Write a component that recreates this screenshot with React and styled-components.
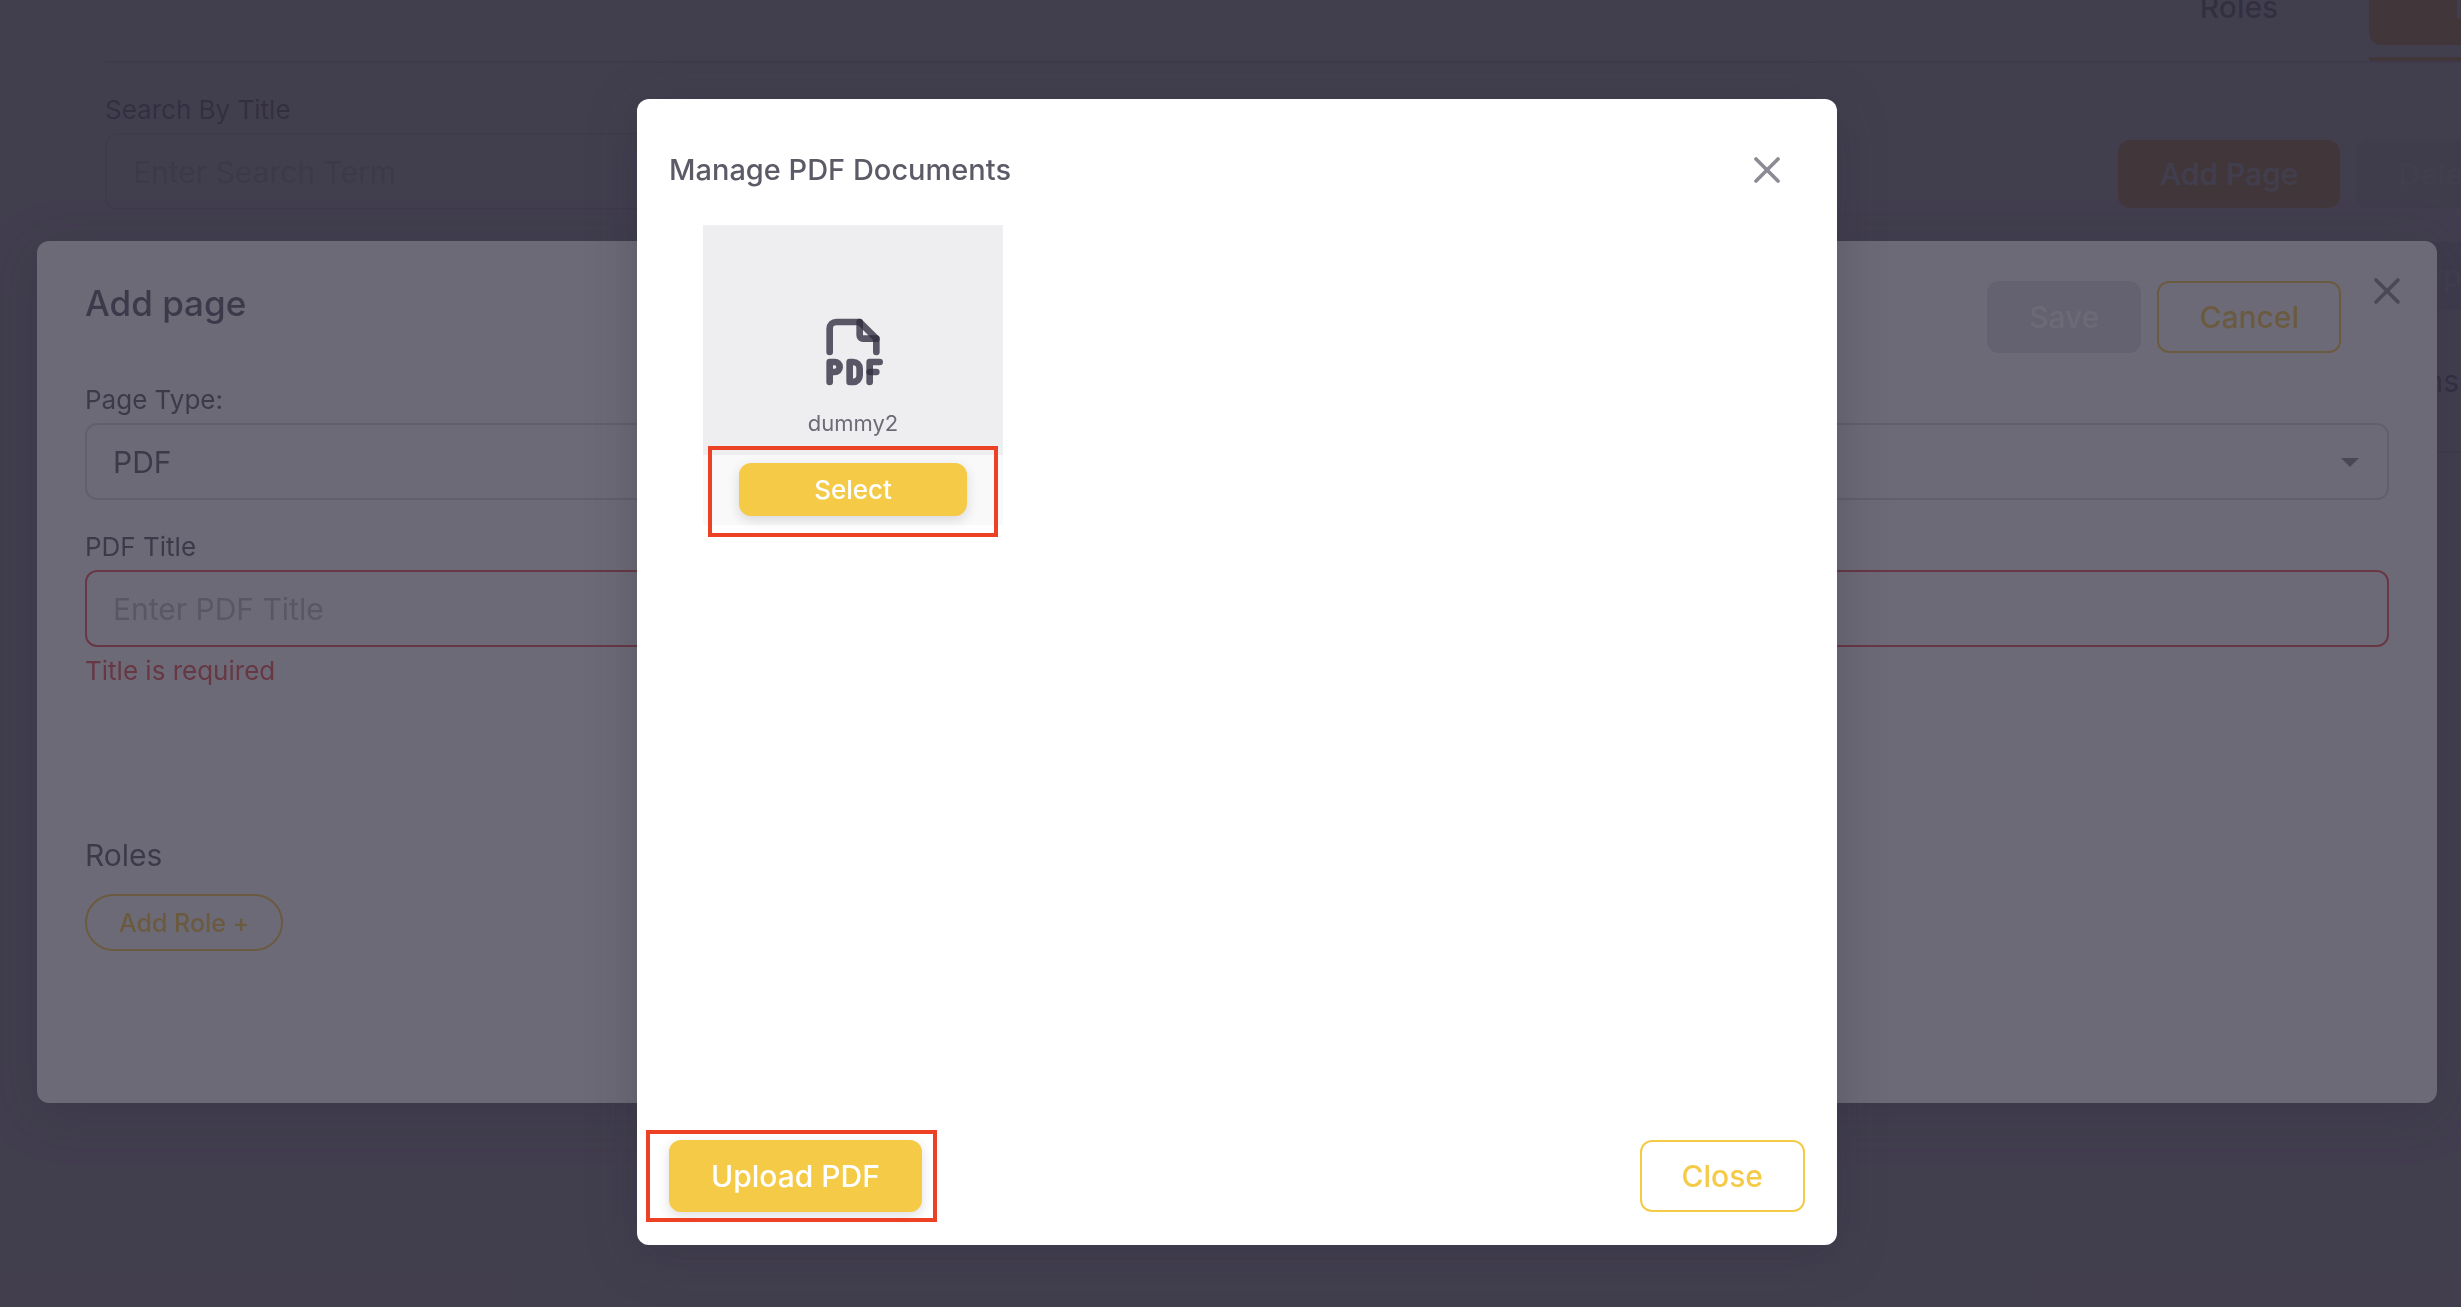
import React, { useState } from 'react';
import styled, { createGlobalStyle } from 'styled-components';
import { TbFileTypePdf, TbX } from 'react-icons/tb';

const App = () => {
  const [pageType, setPageType] = useState('PDF');
  const [title, setTitle] = useState('');
  const [search, setSearch] = useState('');

  return (
    <>
      <GlobalStyle />
      <Page>
        <Content>
          <Tabs>
            <TabItem>
              <Tab>Roles</Tab>
            </TabItem>
            <TabItem $active>
              <Tab $active>Pages</Tab>
            </TabItem>
          </Tabs>
          <Toolbar>
            <SearchField>
              <Label htmlFor="search">Search By Title</Label>
              <Input
                id="search"
                placeholder="Enter Search Term"
                value={search}
                onChange={(e) => setSearch(e.target.value)}
              />
            </SearchField>
            <ToolbarButtons>
              <Button $size="toolbar" $variant="accent">Add Page</Button>
              <Button $size="toolbar" $variant="muted">Delete Pages</Button>
            </ToolbarButtons>
          </Toolbar>
          <Table>
            <thead>
              <tr>
                <th>Type</th>
              </tr>
            </thead>
            <tbody>
              <tr>
                <td>Options</td>
              </tr>
            </tbody>
          </Table>
        </Content>
      </Page>

      <Overlay>
        <Sheet role="dialog" aria-labelledby="sheet-title">
          <SheetHeader>
            <SheetTitle id="sheet-title">Add page</SheetTitle>
            <SheetActions>
              <Button $variant="muted">Save</Button>
              <Button $variant="outlined">Cancel</Button>
            </SheetActions>
            <IconButton aria-label="Close add page">
              <TbX size={44} />
            </IconButton>
          </SheetHeader>
          <Form>
            <Field>
              <Label htmlFor="page-type">Page Type:</Label>
              <SelectWrapper>
                <Select
                  id="page-type"
                  value={pageType}
                  onChange={(e) => setPageType(e.target.value)}
                >
                  <option>PDF</option>
                </Select>
                <Caret viewBox="0 0 18 9" aria-hidden="true">
                  <path d="M0 0h18L9 9z" />
                </Caret>
              </SelectWrapper>
            </Field>
            <Field>
              <Label htmlFor="pdf-title">PDF Title</Label>
              <Input
                id="pdf-title"
                $error
                placeholder="Enter PDF Title"
                value={title}
                onChange={(e) => setTitle(e.target.value)}
              />
              <ErrorText>Title is required</ErrorText>
            </Field>
            <RolesTitle>Roles</RolesTitle>
            <RoleButton type="button">Add Role +</RoleButton>
          </Form>
        </Sheet>
      </Overlay>

      <Overlay>
        <Modal role="dialog" aria-modal="true" aria-labelledby="modal-title">
          <ModalHeader>
            <ModalTitle id="modal-title">Manage PDF Documents</ModalTitle>
            <IconButton aria-label="Close documents">
              <TbX size={44} />
            </IconButton>
          </ModalHeader>
          <ModalBody>
            <Document>
              <Preview>
                <TbFileTypePdf size={80} />
                <FileName>dummy2</FileName>
              </Preview>
              <DocumentAction>
                <Button $size="small">Select</Button>
                <SelectHighlight />
              </DocumentAction>
            </Document>
          </ModalBody>
          <ModalFooter>
            <Highlighted>
              <Button>Upload PDF</Button>
              <UploadHighlight />
            </Highlighted>
            <Button $variant="outlined">Close</Button>
          </ModalFooter>
        </Modal>
      </Overlay>
    </>
  );
};

const GlobalStyle = createGlobalStyle`
  * {
    box-sizing: border-box;
  }

  body {
    margin: 0;
    overflow: hidden;
    background: #f8f7fa;
    color: rgba(47, 43, 61, 0.78);
    font-family: Inter, "Liberation Sans", sans-serif;
    font-size: 30px;
  }

  button,
  input,
  select {
    font: inherit;
    color: inherit;
  }

  h2,
  h3,
  p {
    margin: 0;
  }
`;

const Page = styled.main`
  height: 100vh;
  overflow: hidden;
  padding-left: 29px;
`;

/* wider than the window, scrolled a little way down */
const Content = styled.section`
  height: 150vh;
  margin-right: -244px;
  margin-top: -32px;
  padding: 0 76px;
  background: #ffffff;
`;

const Tabs = styled.nav`
  display: flex;
  justify-content: flex-end;
  border-bottom: 2px solid #cfcdd4;
`;

const TabItem = styled.div`
  width: 260px;
  padding-bottom: 12px;
  border-bottom: 4px solid ${(props) => (props.$active ? '#ffac30' : 'transparent')};
`;

const Tab = styled.button`
  width: 100%;
  height: 77px;
  border: none;
  border-radius: 12px;
  background: ${(props) => (props.$active ? '#ffac30' : 'transparent')};
  color: ${(props) => (props.$active ? '#ffffff' : 'rgba(47, 43, 61, 0.78)')};
  font-weight: 500;
`;

const Toolbar = styled.div`
  display: flex;
  justify-content: space-between;
  align-items: flex-end;
  padding: 29px 0 32px;
`;

const SearchField = styled.div`
  width: 800px;
`;

const ToolbarButtons = styled.div`
  display: flex;
  gap: 16px;
  padding-bottom: 2px;
`;

const Table = styled.table`
  width: 100%;
  border-collapse: collapse;

  th {
    height: 68px;
    padding-right: 150px;
    background: #dcdae0;
    color: #f8f7fa;
    font-weight: 400;
    text-align: right;
  }

  td {
    height: 142px;
    padding-right: 170px;
    border-bottom: 2px solid #dbdade;
    text-align: right;
  }
`;

const Overlay = styled.div`
  position: fixed;
  inset: 0;
  display: flex;
  justify-content: center;
  align-items: center;
  padding: 37px 0 0 13px;
  background: rgba(47, 43, 61, 0.7);
`;

const Sheet = styled.section`
  width: calc(100% - 48px);
  background: #ffffff;
  border-radius: 12px;
  box-shadow: 0 10px 50px rgba(47, 43, 61, 0.3);
`;

const SheetHeader = styled.header`
  display: flex;
  align-items: flex-start;
  padding: 28px 28px 0 48px;
`;

const SheetTitle = styled.h2`
  flex: 1;
  padding-top: 10px;
  font-size: 35px;
  font-weight: 500;
  line-height: 48px;
`;

const SheetActions = styled.div`
  display: flex;
  gap: 16px;
  padding-top: 12px;
  margin-right: 24px;
`;

const IconButton = styled.button`
  display: flex;
  padding: 0;
  border: none;
  background: none;
  cursor: pointer;
  color: #8d8a94;
`;

const Form = styled.form`
  padding: 29px 48px 152px;
`;

const Field = styled.div`
  margin-bottom: 29px;
`;

const Label = styled.label`
  display: block;
  margin-bottom: 5px;
  font-size: 26px;
  line-height: 36px;
`;

const Input = styled.input`
  display: block;
  width: 100%;
  height: 77px;
  padding: 0 26px;
  border: 2px solid ${(props) => (props.$error ? '#ea5455' : '#dbdade')};
  border-radius: 12px;
  background: transparent;
  outline: none;

  &::placeholder {
    color: rgba(47, 43, 61, 0.3);
    opacity: 1;
  }
`;

const SelectWrapper = styled.div`
  position: relative;
`;

const Select = styled.select`
  display: block;
  width: 100%;
  height: 77px;
  padding: 0 26px;
  border: 2px solid #dbdade;
  border-radius: 12px;
  background: transparent;
  appearance: none;
`;

const Caret = styled.svg`
  position: absolute;
  top: 35px;
  right: 30px;
  width: 18px;
  height: 9px;
  fill: #8d8a94;
  pointer-events: none;
`;

const ErrorText = styled.p`
  padding-top: 6px;
  color: #ea5455;
  font-size: 26px;
  line-height: 36px;
`;

const RolesTitle = styled.h3`
  padding: 117px 0 19px;
  font-size: 30px;
  font-weight: 400;
  line-height: 40px;
`;

const RoleButton = styled.button`
  height: 57px;
  padding: 0 32px;
  border: 2px solid #f5ca46;
  border-radius: 29px;
  background: transparent;
  color: #f5ca46;
  font-size: 25px;
  font-weight: 500;
  cursor: pointer;
`;

const buttonColors = {
  filled: { background: '#f5ca46', border: '#f5ca46', color: '#ffffff' },
  accent: { background: '#ffac30', border: '#ffac30', color: '#ffffff' },
  outlined: { background: 'transparent', border: '#f5ca46', color: '#f5ca46' },
  muted: { background: '#e2e0e6', border: '#e2e0e6', color: '#ffffff' },
};

const buttonHeights = { small: '53px', toolbar: '68px', regular: '72px' };

const Button = styled.button`
  height: ${(props) => buttonHeights[props.$size || 'regular']};
  width: ${(props) => (props.$size === 'small' ? '228px' : 'auto')};
  padding: 0 40px;
  border: 2px solid ${(props) => buttonColors[props.$variant || 'filled'].border};
  border-radius: 12px;
  background: ${(props) => buttonColors[props.$variant || 'filled'].background};
  color: ${(props) => buttonColors[props.$variant || 'filled'].color};
  box-shadow: ${(props) => (props.$variant ? 'none' : '0 4px 12px rgba(47, 43, 61, 0.16)')};
  font-size: ${(props) => (props.$size === 'small' ? '26px' : '30px')};
  font-weight: 500;
  cursor: pointer;
`;

const Modal = styled.section`
  width: 1200px;
  max-width: 100%;
  background: #ffffff;
  border-radius: 12px;
  box-shadow: 0 10px 50px rgba(47, 43, 61, 0.3);
`;

const ModalHeader = styled.header`
  display: flex;
  justify-content: space-between;
  align-items: center;
  min-height: 126px;
  padding: 48px 48px 32px 32px;
`;

const ModalTitle = styled.h2`
  font-size: 29px;
  font-weight: 500;
  line-height: 46px;
`;

const ModalBody = styled.div`
  min-height: calc(100vh - 392px);
  padding: 0 66px;
`;

const Document = styled.article`
  width: 300px;
  background: #f9f9f9;
`;

const Preview = styled.div`
  display: flex;
  flex-direction: column;
  align-items: center;
  height: 230px;
  padding-top: 87px;
  background: #eeeef0;
`;

const FileName = styled.p`
  padding-top: 16px;
  color: rgba(47, 43, 61, 0.68);
  font-size: 22px;
  line-height: 30px;
`;

const DocumentAction = styled.div`
  position: relative;
  display: flex;
  justify-content: center;
  padding: 8px 0 9px;
`;

const Highlight = styled.span`
  position: absolute;
  border: 4px solid #ec4125;
  pointer-events: none;
`;

const SelectHighlight = styled(Highlight)`
  inset: -9px 5px -12px;
`;

const UploadHighlight = styled(Highlight)`
  inset: -10px -15px -10px -23px;
`;

const ModalFooter = styled.footer`
  display: flex;
  justify-content: space-between;
  padding: 0 32px 33px;
`;

const Highlighted = styled.div`
  position: relative;
`;

export default App;
